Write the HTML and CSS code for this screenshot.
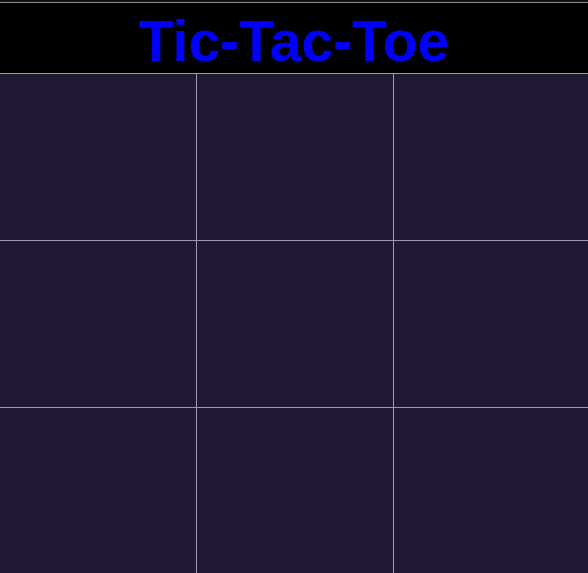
FILE: index.html
```html
<!DOCTYPE html>
<html lang="en">
<head>
<meta charset="utf-8">
<title>Tic-Tac-Toe</title>
<link rel="stylesheet" href="styles.css">
</head>
<body>
  <header class="title-bar">
    <h1 class="title">Tic-Tac-Toe</h1>
  </header>
  <main class="board">
    <div class="cell"></div>
    <div class="cell"></div>
    <div class="cell"></div>
    <div class="cell"></div>
    <div class="cell"></div>
    <div class="cell"></div>
    <div class="cell"></div>
    <div class="cell"></div>
    <div class="cell"></div>
  </main>
</body>
</html>
```
FILE: styles.css
```css
html, body {
  margin: 0;
  padding: 0;
  height: 100%;
  background: #111;
}

body {
  display: flex;
  flex-direction: column;
  font-family: "Liberation Sans", Arial, sans-serif;
  padding-top: 2px;
  box-sizing: border-box;
}

.title-bar {
  background: #000;
  border-top: 1px solid #8a8a94;
  height: 71px;
  box-sizing: border-box;
  padding-top: 7px;
  display: flex;
  align-items: center;
  justify-content: center;
}

.title {
  margin: 0;
  color: #0000ff;
  font-size: 57px;
  font-weight: bold;
  line-height: 1;
}

.board {
  flex: 1;
  display: grid;
  grid-template-columns: 196px 196px 1fr;
  grid-template-rows: 166px 166px 1fr;
  background: #9c9cb0;
  gap: 1px;
  padding-top: 1px;
}

.cell {
  background: #211936;
}
```
